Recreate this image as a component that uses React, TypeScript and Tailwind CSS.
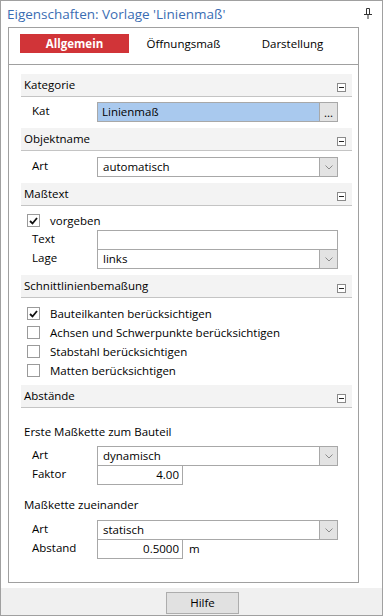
import React from "react";

const font = "font-['Open_Sans','Noto_Sans',sans-serif]";

function Minus() {
  return (
    <span className="mt-[9px] flex h-[9px] w-[9px] items-center justify-center border border-[#8a8a8a] bg-white">
      <span className="h-px w-[5px] bg-[#222]" />
    </span>
  );
}

function Header({ title }: { title: string }) {
  return (
    <div className="flex h-[23px] items-start justify-between border-b border-[#c4c4c4] bg-[#f3f3f3] pl-[3px] pr-[6px]">
      <span className="pt-[3px] leading-[16px]">{title}</span>
      <Minus />
    </div>
  );
}

function Chevron() {
  return (
    <span className="flex w-[18px] items-center justify-center self-stretch border-l border-[#a8a8a8] bg-[#e3e3e3]">
      <svg width="8" height="5" viewBox="0 0 8 5">
        <path d="M0.5 0.5 L4 4 L7.5 0.5" fill="none" stroke="#8a8a8a" strokeWidth="1" />
      </svg>
    </span>
  );
}

function Label({ children }: { children: React.ReactNode }) {
  return <span className="w-[76px] shrink-0 pl-[11px]">{children}</span>;
}

function SelectRow({ label, value, className = "" }: { label: string; value: string; className?: string }) {
  return (
    <div className={`flex h-[20px] items-stretch pr-[14px] ${className}`}>
      <Label>{label}</Label>
      <div className="flex flex-1 items-stretch border border-[#a8a8a8] bg-white">
        <span className="flex flex-1 items-center pl-[5px]">{value}</span>
        <Chevron />
      </div>
    </div>
  );
}

function Check({ checked, label }: { checked?: boolean; label: string }) {
  return (
    <div className="flex h-[19px] items-center gap-[10px] pl-[6px]">
      <span className="flex h-[13px] w-[13px] items-center justify-center border border-[#9a9a9a] bg-white">
        {checked && (
          <svg width="9" height="8" viewBox="0 0 9 8">
            <path d="M1 4 L3.5 6.5 L8 1" fill="none" stroke="#111" strokeWidth="1.8" />
          </svg>
        )}
      </span>
      <span>{label}</span>
    </div>
  );
}

export default function App() {
  return (
    <div className={`flex h-[616px] w-[383px] flex-col border border-[#a0a0a0] bg-white text-[11.5px] text-black ${font}`}>
      <div className="flex h-[26px] shrink-0 items-center justify-between pl-[6px] pr-[10px]">
        <span className="text-[13.5px] text-[#3a6db3]">Eigenschaften: Vorlage 'Linienmaß'</span>
        <svg width="8" height="11" viewBox="0 0 8 11" className="mb-[2px]">
          <path d="M2.5 0.5 H5.5 V6.5 M2.5 0.5 V6.5" fill="none" stroke="#333" strokeWidth="1" />
          <path d="M0 6.5 H8" stroke="#333" strokeWidth="1" />
          <path d="M4 7 V11" stroke="#333" strokeWidth="1" />
        </svg>
      </div>

      <div className="ml-[7px] flex h-[556px] w-[351px] shrink-0 flex-col border border-[#a0a0a0]">
        <div className="flex h-[37px] shrink-0 items-start border-b border-[#a0a0a0] pl-[11px] pt-[6px]">
          <span className="flex h-[19px] w-[109px] items-center justify-center bg-[#d13438] font-bold text-white">
            Allgemein
          </span>
          <span className="flex h-[19px] w-[109px] items-center justify-center">Öffnungsmaß</span>
          <span className="flex h-[19px] w-[109px] items-center justify-center">Darstellung</span>
        </div>

        <div className="flex flex-col pl-[12px] pr-[6px] pt-[9px]">
          <Header title="Kategorie" />
          <div className="mb-[6px] mt-[5px] flex h-[20px] items-stretch pr-[14px]">
            <Label>Kat</Label>
            <div className="flex flex-1 items-stretch border border-[#a8a8a8] bg-[#a9c9ee]">
              <span className="flex flex-1 items-center pl-[4px]">Linienmaß</span>
              <span className="flex w-[18px] items-end justify-center border-l border-[#a8a8a8] bg-[#e3e3e3] pb-[1px] leading-[14px]">
                ...
              </span>
            </div>
          </div>

          <Header title="Objektname" />
          <SelectRow label="Art" value="automatisch" className="mb-[6px] mt-[6px]" />

          <Header title="Maßtext" />
          <div className="mt-[5px]">
            <Check checked label="vorgeben" />
          </div>
          <div className="flex h-[20px] items-stretch pr-[14px]">
            <Label>Text</Label>
            <div className="flex-1 border border-[#a8a8a8] bg-white" />
          </div>
          <SelectRow label="Lage" value="links" className="-mt-px mb-[6px]" />

          <Header title="Schnittlinienbemaßung" />
          <div className="mb-[5px] mt-[6px] flex flex-col">
            <Check checked label="Bauteilkanten berücksichtigen" />
            <Check label="Achsen und Schwerpunkte berücksichtigen" />
            <Check label="Stabstahl berücksichtigen" />
            <Check label="Matten berücksichtigen" />
          </div>

          <Header title="Abstände" />
          <div className="mt-[14px] flex h-[20px] items-center pl-[3px]">Erste Maßkette zum Bauteil</div>
          <SelectRow label="Art" value="dynamisch" className="mt-[4px]" />
          <div className="-mt-px flex h-[20px] items-stretch">
            <Label>Faktor</Label>
            <span className="flex w-[86px] items-center justify-end border border-[#a8a8a8] bg-white pr-[3px]">
              4.00
            </span>
          </div>
          <div className="mt-[10px] flex h-[20px] items-center pl-[3px]">Maßkette zueinander</div>
          <SelectRow label="Art" value="statisch" className="mt-[5px]" />
          <div className="-mt-px flex h-[20px] items-stretch">
            <Label>Abstand</Label>
            <span className="flex w-[86px] items-center justify-end border border-[#a8a8a8] bg-white pr-[3px]">
              0.5000
            </span>
            <span className="flex items-center pl-[6px]">m</span>
          </div>
        </div>
      </div>

      <div className="mt-[5px] flex flex-1 items-start bg-[#f0f0f0] pl-[165px] pt-[4px]">
        <button className="h-[22px] w-[73px] border border-[#adadad] bg-[#e1e1e1] text-[11.5px]">Hilfe</button>
      </div>
    </div>
  );
}
